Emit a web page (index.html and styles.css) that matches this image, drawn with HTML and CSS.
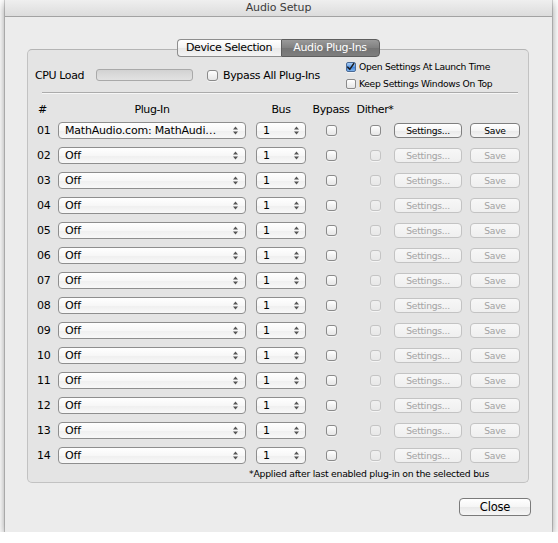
FILE: index.html
```html
<!DOCTYPE html>
<html>
<head>
<meta charset="utf-8">
<title>Audio Setup</title>
<link rel="stylesheet" href="styles.css">
</head>
<body>
<div class="window">
  <div class="titlebar">Audio Setup</div>
  <div class="tabs">
    <div class="tab tab-left">Device Selection</div>
    <div class="tab tab-right sel">Audio Plug-Ins</div>
  </div>
  <div class="group">
    <div class="toprow">
      <div class="cpu-label">CPU Load</div>
      <div class="meter"></div>
      <div class="bypass-all"><span class="cb"></span><span>Bypass All Plug-Ins</span></div>
      <div class="opts">
        <div class="opt"><span class="cb small checked"><svg width="10" height="10" viewBox="0 0 10 10"><path d="M2 5.2 L4.2 7.6 L8.6 1.2" fill="none" stroke="#1c1c1c" stroke-width="1.7" stroke-linecap="round" stroke-linejoin="round"/></svg></span><span>Open Settings At Launch Time</span></div>
        <div class="opt"><span class="cb small"></span><span>Keep Settings Windows On Top</span></div>
      </div>
    </div>
    <div class="sep"></div>
    <div class="grid head">
      <div class="hnum">#</div>
      <div class="hc hplug">Plug-In</div>
      <div class="hc">Bus</div>
      <div class="hc">Bypass</div>
      <div class="hc">Dither*</div>
      <div></div>
      <div></div>
    </div>
    <div id="rows"></div>
    <div class="foot">*Applied after last enabled plug-in on the selected bus</div>
  </div>
  <div class="actions"><div class="btn close">Close</div></div>
</div>
<script src="app.js"></script>
</body>
</html>
```
FILE: styles.css
```css
* { box-sizing: border-box; }
html, body { margin: 0; padding: 0; background: #ffffff; }
body { font-family: "DejaVu Sans", sans-serif; font-size: 11px; color: #000; }

.window {
  margin-left: 5px;
  width: 547px;
  height: 532px;
  background: #ececec;
  box-shadow: 0 0 0 1px rgba(0,0,0,0.16), 0 3px 9px rgba(0,0,0,0.45);
  display: flex;
  flex-direction: column;
}
.titlebar {
  height: 17px;
  border-bottom: 1px solid #a2a2a2;
  background: linear-gradient(#efefef, #dcdcdc);
  text-align: center;
  font-size: 11px;
  line-height: 16px;
  color: #3b3b3b;
  letter-spacing: -0.1px;
}

.tabs {
  margin: 22px 23px -8px 22px;
  display: flex;
  justify-content: center;
  position: relative;
  z-index: 1;
}
.tab {
  height: 18px;
  line-height: 16px;
  text-align: center;
  border: 1px solid #8e8e8e;
  background: linear-gradient(#ffffff, #f3f3f3 50%, #e8e8e8 51%, #f4f4f4);
  letter-spacing: -0.35px;
}
.tab-left { width: 104px; border-radius: 4px 0 0 4px; border-right: none; }
.tab-right { width: 99px; border-radius: 0 4px 4px 0; }
.tab.sel {
  background: linear-gradient(#9a9a9a, #808080 50%, #747474 51%, #7e7e7e);
  border-color: #5e5e5e;
  color: #fff;
}

.group {
  margin: 0 23px 0 22px;
  height: 434px;
  border: 1px solid #c2c2c2;
  border-top-color: #b4b4b4;
  border-radius: 5px;
  background: #e4e4e4;
  padding-top: 8px;
  display: flex;
  flex-direction: column;
}
.toprow {
  height: 34px;
  display: flex;
  align-items: center;
  padding-left: 7px;
}
.cpu-label { width: 61px; letter-spacing: -0.4px; }
.meter {
  width: 97px;
  height: 12px;
  border: 1px solid #a9a9a9;
  border-radius: 3px;
  background: linear-gradient(#d2d2d2, #e2e2e2);
}
.bypass-all {
  margin-left: 14px;
  width: 139px;
  display: flex;
  align-items: center;
  letter-spacing: -0.35px;
}
.bypass-all .cb { margin-right: 5px; }
.opts { display: flex; flex-direction: column; }
.opt {
  height: 17px;
  display: flex;
  align-items: center;
  font-size: 9.2px;
  letter-spacing: -0.3px;
}
.opt .cb { margin-right: 3px; }

.cb {
  display: inline-flex;
  flex: none;
  width: 11px;
  height: 11px;
  border: 1px solid #8a8a8a;
  border-radius: 3px;
  background: linear-gradient(#ffffff, #f2f2f2 50%, #e6e6e6);
  box-shadow: 0 1px 0 rgba(255,255,255,0.6);
}
.cb.small { width: 10px; height: 10px; border-radius: 2px; }
.cb.checked {
  background: linear-gradient(#a9cdf5, #5c9ae6 50%, #3f83dc 51%, #7fb4ee);
  border-color: #4a6a95;
  overflow: visible;
}
.cb.checked svg { display: block; margin: -1px 0 0 -1px; }
.cb.dis {
  border-color: #c4c4c4;
  background: linear-gradient(#f0f0f0, #e8e8e8);
}

.sep {
  margin: 0 10px 0 14px;
  height: 2px;
  border-top: 1px solid #ababab;
  border-bottom: 1px solid #f6f6f6;
}

.grid {
  display: grid;
  grid-template-columns: 21px 198px 50px 50px 38px 76px 50px;
  padding-left: 9px;
  align-items: center;
}
.head { margin-top: 6px; height: 18px; }
.hnum { padding-left: 1px; }
.hc { display: flex; justify-content: center; white-space: nowrap; letter-spacing: -0.4px; }
.hplug { width: 188px; }
.row { height: 25px; }
.num { letter-spacing: -0.2px; }

.popup {
  height: 17px;
  border: 1px solid #8e8e8e;
  border-radius: 4px;
  background: linear-gradient(#ffffff, #f7f7f7 50%, #efefef 51%, #f8f8f8);
  display: flex;
  align-items: center;
  padding-left: 6px;
  white-space: nowrap;
  overflow: hidden;
  letter-spacing: -0.2px;
}
.popup .txt { flex: 1; overflow: hidden; }
.popup svg { flex: none; display: block; }
.p-plug { width: 188px; padding-right: 7px; }
.p-bus { width: 50px; padding-right: 6px; }

.chkcell { display: flex; justify-content: center; }

.btn {
  height: 15px;
  border: 1px solid #7f7f7f;
  border-radius: 4px;
  background: linear-gradient(#ffffff, #f5f5f5 50%, #e9e9e9 51%, #f5f5f5);
  display: flex;
  align-items: center;
  justify-content: center;
  font-size: 9.2px;
  letter-spacing: -0.25px;
  white-space: nowrap;
}
.btn.dis {
  border-color: #c3c3c3;
  color: #a3a3a3;
  background: linear-gradient(#f7f7f7, #efefef);
}
.b-set { width: 68px; }
.b-save { width: 50px; }

.foot {
  height: 12px;
  line-height: 12px;
  text-align: right;
  padding-right: 39px;
  font-size: 9.3px;
  letter-spacing: -0.26px;
}

.actions {
  display: flex;
  justify-content: flex-end;
  margin: 15px 21px 0 0;
}
.btn.close {
  width: 72px;
  height: 18px;
  font-size: 11.5px;
  letter-spacing: -0.2px;
  border-color: #7a7a7a;
}
```
FILE: app.js
```js
(function () {
  var rows = document.getElementById('rows');
  var arrow = '<svg width="5" height="9" viewBox="0 0 5 9"><path d="M0 3.6 L2.5 0.4 L5 3.6 Z M0 5.4 L2.5 8.6 L5 5.4 Z" fill="#555"/></svg>';
  var html = '';
  for (var i = 1; i <= 14; i++) {
    var n = (i < 10 ? '0' : '') + i;
    var first = i === 1;
    html += '<div class="grid row">' +
      '<div class="num">' + n + '</div>' +
      '<div><div class="popup p-plug"><span class="txt">' + (first ? 'MathAudio.com: MathAudi\u2026' : 'Off') + '</span>' + arrow + '</div></div>' +
      '<div><div class="popup p-bus"><span class="txt">1</span>' + arrow + '</div></div>' +
      '<div class="chkcell"><span class="cb"></span></div>' +
      '<div class="chkcell"><span class="cb' + (first ? '' : ' dis') + '"></span></div>' +
      '<div><div class="btn b-set' + (first ? '' : ' dis') + '">Settings...</div></div>' +
      '<div><div class="btn b-save' + (first ? '' : ' dis') + '">Save</div></div>' +
      '</div>';
  }
  rows.innerHTML = html;
})();
```
